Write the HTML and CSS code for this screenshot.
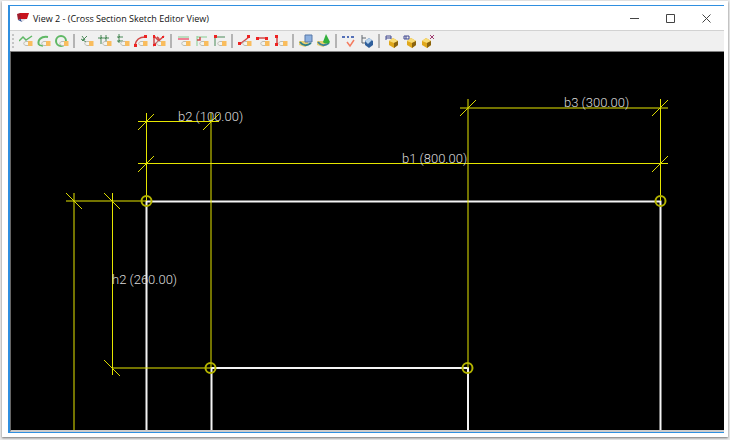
FILE: index.html
```html
<!DOCTYPE html>
<html lang="en">
<head>
    <meta charset="UTF-8">
    <meta name="viewport" content="width=device-width, initial-scale=1.0">
    <title>View 2 - (Cross Section Sketch Editor View)</title>
    <link rel="stylesheet" href="styles.css">
</head>
<body>
    <svg class="defs" aria-hidden="true">
        <!-- small tag shared by most of the sketch tools -->
        <symbol id="tag" viewBox="0 0 14 14">
            <path d="M9 7.500H7C4 8 4 11 7 11.500h2" fill="#f4f4ee" stroke="#bcbcb4"/>
            <path d="M9 7h4.500v5H9z" fill="#f9bd5e"/>
        </symbol>
        <symbol id="brick" viewBox="0 0 14 14">
            <path d="M3 7l4-3 5 3v4l-4 3-5-3z" fill="#e0a81c"/>
            <path d="M3 7l4-3 5 3-4 2z" fill="#f8dc78"/>
            <path d="M8 9l4-2v4l-4 3z" fill="#8a6410"/>
        </symbol>
    </svg>
    <div class="frame">
        <div class="window">
            <header class="titlebar">
                <svg class="logo" width="13" height="12" viewBox="0 0 13 12">
                    <path d="M4 1h9l-2 6H4z" fill="#c8141e"/>
                    <path d="M1 2l3-1 1 6-3 1z" fill="#a01c2c"/>
                    <path d="M2 8l3-1 1 3z" fill="#2c4c90"/>
                    <path d="M5 7h5l-4 3z" fill="#dcdce4"/>
                </svg>
                <h1>View 2 - (Cross Section Sketch Editor View)</h1>
                <div class="window-buttons">
                    <button type="button" aria-label="Minimize"><svg width="9" height="9"><path d="M0 4.500h9"/></svg></button>
                    <button type="button" aria-label="Maximize"><svg width="9" height="9"><path d="M.5.5h8v8h-8z"/></svg></button>
                    <button type="button" aria-label="Close"><svg width="9" height="9"><path d="M.5.5l8 8M8.500.5l-8 8"/></svg></button>
                </div>
            </header>
            <div class="toolbar" role="toolbar" aria-label="Sketch tools">
                <span class="grip"></span>
                <button type="button" aria-label="Polyline"><svg viewBox="0 0 14 14"><path class="green" d="M0 7l4-4 3 3 6-4"/><use href="#tag"/></svg></button>
                <button type="button" aria-label="Arc"><svg viewBox="0 0 14 14"><path class="green thick" d="M2 11C0 6 4 2 11 3"/><path class="green" d="M2 11l4 1"/><use href="#tag"/></svg></button>
                <button type="button" aria-label="Circle"><svg viewBox="0 0 14 14"><circle class="green thick" cx="6" cy="7" r="5"/><use href="#tag"/></svg></button>
                <span class="separator"></span>
                <button type="button" aria-label="Slanted dimension"><svg viewBox="0 0 14 14"><path class="dark" d="M1 5l7 4M2 2l3 4M7 2L2 7"/><use href="#tag"/></svg></button>
                <button type="button" aria-label="Horizontal dimension"><svg viewBox="0 0 14 14"><path class="dark" d="M0 4h11M3 1v9M8 1v6M2 5l2-2M7 5l2-2"/><use href="#tag"/></svg></button>
                <button type="button" aria-label="Vertical dimension"><svg viewBox="0 0 14 14"><path class="dark" d="M3 0v9M1 3h6M1 7h6M2 4l2-2M2 8l2-2"/><use href="#tag"/></svg></button>
                <button type="button" aria-label="Radius dimension"><svg viewBox="0 0 14 14"><path class="red" d="M1 11C2 6 5 3 11 3"/><path class="dot" d="M0 10h3v3H0zM10 1h3v3h-3z"/><use href="#tag"/></svg></button>
                <button type="button" aria-label="Angle dimension"><svg viewBox="0 0 14 14"><path class="red" d="M2 2l9 9M12 2L2 11V3M5 3c3 1 3 6 1 7"/><path class="dot" d="M1 1h2v3H1zM10 2h2v2h-2zM1 10h3v2H1z"/><use href="#tag"/></svg></button>
                <span class="separator"></span>
                <button type="button" aria-label="Parallel"><svg viewBox="0 0 14 14"><path class="pale" d="M1 3h11"/><path class="pink" d="M1 5h11"/><use href="#tag"/></svg></button>
                <button type="button" aria-label="Perpendicular"><svg viewBox="0 0 14 14"><path class="pale" d="M2 2v10M2 3h10"/><path class="red" d="M5 3v3H2"/><use href="#tag"/></svg></button>
                <button type="button" aria-label="Coincident"><svg viewBox="0 0 14 14"><path class="dark" d="M2 3h10M2 3v9"/><path class="dot" d="M1 1h3v3H1z"/><use href="#tag"/></svg></button>
                <span class="separator"></span>
                <button type="button" aria-label="Fixed line"><svg viewBox="0 0 14 14"><path class="red" d="M2 10l9-7"/><path class="dot" d="M0 8h3v3H0zM9 1h3v3H9z"/><use href="#tag"/></svg></button>
                <button type="button" aria-label="Horizontal constraint"><svg viewBox="0 0 14 14"><path class="red" d="M2 4h9"/><path class="dot" d="M0 3h3v3H0zM9 3h3v3H9z"/><use href="#tag"/></svg></button>
                <button type="button" aria-label="Vertical constraint"><svg viewBox="0 0 14 14"><path class="red" d="M3 3v8"/><path class="dot" d="M1 1h3v3H1zM1 9h3v3H1z"/><use href="#tag"/></svg></button>
                <span class="separator"></span>
                <button type="button" aria-label="Chamfer rectangle"><svg viewBox="0 0 14 14"><path d="M0 7h9v4l-3 2-6-2z" fill="#e8d070"/><path d="M1 8c3 4 7 4 11 1" fill="none" stroke="#2f7f88" stroke-width="2"/><path d="M6 1h7v7H6z" fill="#8cb0e0" stroke="#5878a8"/></svg></button>
                <button type="button" aria-label="Chamfer cone"><svg viewBox="0 0 14 14"><path d="M0 7h9v4l-3 2-6-2z" fill="#e8d070"/><path d="M1 8c3 4 7 4 11 1" fill="none" stroke="#3d7f98" stroke-width="2"/><path d="M9 0l4 8c-1 2-6 2-7 0z" fill="#32b03c"/></svg></button>
                <span class="separator"></span>
                <button type="button" aria-label="Check points"><svg viewBox="0 0 14 14"><path d="M0 2h3v2H0zM5 2h2v2H5zM9 2h3v2H9z" fill="#5470b8"/><path d="M5 8l3 4 4-6" fill="none" stroke="#f47c60" stroke-width="1.500"/></svg></button>
                <button type="button" aria-label="Sketch browser"><svg viewBox="0 0 14 14"><path d="M2 1v8h4M2 4h4" fill="none" stroke="#606870"/><path d="M5 7l4-3 4 3v4l-4 3-4-3z" fill="#2f5f9c"/><path d="M5 7l4-3 3 2-4 4z" fill="#b8d4ee"/></svg></button>
                <span class="separator"></span>
                <button type="button" aria-label="Component to left"><svg viewBox="0 0 14 14"><use href="#brick" x="1"/><path d="M1 6V2h5v3M1 4h5" class="navy"/></svg></button>
                <button type="button" aria-label="Component to middle"><svg viewBox="0 0 14 14"><use href="#brick" x="1"/><path d="M1 2h5v3H1zM3 2v3" class="navy"/></svg></button>
                <button type="button" aria-label="Delete component"><svg viewBox="0 0 14 14"><use href="#brick" x="-2"/><path d="M9 1l4 4M13 1L9 5" fill="none" stroke="#a03c70"/></svg></button>
            </div>
            <main class="canvas">
                <svg class="drawing" role="img" aria-label="Cross section with dimensions">
                    <!-- section outline -->
                    <g class="outline">
                        <path d="M135.500 1000V149.500H649.500V1000"/>
                        <path d="M200.500 1000V316H457V1000"/>
                    </g>
                    <!-- dimension and extension lines -->
                    <g class="dimension">
                        <path d="M135.500 61V149"/>
                        <path d="M200 61V316"/>
                        <path d="M457 47V316"/>
                        <path d="M649.500 47V149"/>
                        <path d="M127 69.500H208"/>
                        <path d="M127 111.500H657"/>
                        <path d="M449 56H657"/>
                        <path d="M55 149H135"/>
                        <path d="M63 141V1000"/>
                        <path d="M101.500 141V323"/>
                        <path d="M101 316H200"/>
                    </g>
                    <g class="tick">
                        <path d="M127 78l16-16M192 78l16-16M127 120l16-16M449 64l16-16M641 64l16-16M641 120l16-16"/>
                        <path d="M55 141l16 16M93 141l16 16M93 308l16 16"/>
                    </g>
                    <g class="node">
                        <circle cx="135.500" cy="149" r="5"/>
                        <circle cx="649.500" cy="149" r="5"/>
                        <circle cx="199.500" cy="316" r="5"/>
                        <circle cx="456.500" cy="316" r="5"/>
                    </g>
                    <g class="label">
                        <text x="167" y="69">b2 (100.00)</text>
                        <text x="391" y="111">b1 (800.00)</text>
                        <text x="553" y="55">b3 (300.00)</text>
                        <text x="101" y="232">h2 (260.00)</text>
                    </g>
                </svg>
            </main>
        </div>
    </div>
</body>
</html>
```
FILE: styles.css
```css
* {
    box-sizing: border-box;
}
body {
    margin: 0;
    padding: 1px 2px 3px;
    height: 100vh;
    background: #e9e9e9;
    font-family: "Open Sans", sans-serif;
}
.defs {
    position: absolute;
    width: 0;
    height: 0;
}
.frame {
    height: 100%;
    padding: 4px 4px 4px 6px;
    background: #fff;
    box-shadow: 0 1px 2px rgba(0, 0, 0, 0.5);
}
.window {
    display: flex;
    flex-direction: column;
    height: 100%;
    border: solid #2f8fe0;
    border-width: 1px 0 1px 2px;
}
.titlebar {
    display: flex;
    align-items: center;
    height: 24px;
    padding-left: 6px;
    background: #fff;
}
.titlebar h1 {
    flex: 1;
    margin: 0 0 0 4px;
    font-size: 9px;
    font-weight: 400;
    color: #111;
}
.window-buttons {
    display: flex;
}
.window-buttons button {
    display: flex;
    align-items: center;
    justify-content: center;
    width: 36px;
    height: 24px;
    padding: 0;
    border: none;
    background: none;
}
.window-buttons path {
    fill: none;
    stroke: #444;
}
.toolbar {
    display: flex;
    align-items: center;
    gap: 4px;
    height: 22px;
    padding-left: 2px;
    border-top: 1px solid #d2d2d2;
    border-bottom: 1px solid #808080;
    background: #f0f0f0;
}
.grip {
    width: 2px;
    height: 14px;
    margin-right: 1px;
    background: repeating-linear-gradient(#c4c4c4 0 2px, #f0f0f0 2px 4px);
}
.separator {
    width: 2px;
    height: 14px;
    margin-right: 1px;
    background: #b4b4b4;
}
.toolbar button {
    width: 14px;
    height: 14px;
    padding: 0;
    border: none;
    background: none;
}
.toolbar button svg {
    display: block;
    width: 14px;
    height: 14px;
}
.green, .dark, .pale, .pink, .red, .navy {
    fill: none;
}
.green {
    stroke: #5fb865;
    stroke-width: 1.5;
}
.green.thick {
    stroke-width: 2;
}
.dark {
    stroke: #4a8a58;
}
.pale {
    stroke: #86cc90;
}
.pink {
    stroke: #ee8296;
    stroke-width: 2;
}
.red {
    stroke: #d04a48;
    stroke-width: 1.5;
}
.dot {
    fill: #ee2222;
}
.navy {
    stroke: #404890;
}
.canvas {
    flex: 1;
    min-height: 0;
    border-left: 1px solid #666;
    border-bottom: 2px solid #ccc;
    background: #000;
}
.drawing {
    display: block;
    width: 100%;
    height: 100%;
}
.outline path {
    fill: none;
    stroke: #f4f4f4;
    stroke-width: 2;
}
.dimension path {
    stroke: #e6e600;
}
.tick path {
    stroke: #dcdc00;
}
.node circle {
    fill: none;
    stroke: #b4b400;
    stroke-width: 2;
}
.label text {
    font-family: Roboto, sans-serif;
    font-size: 13px;
    font-weight: 300;
    fill: #dcdcdc;
}
```
